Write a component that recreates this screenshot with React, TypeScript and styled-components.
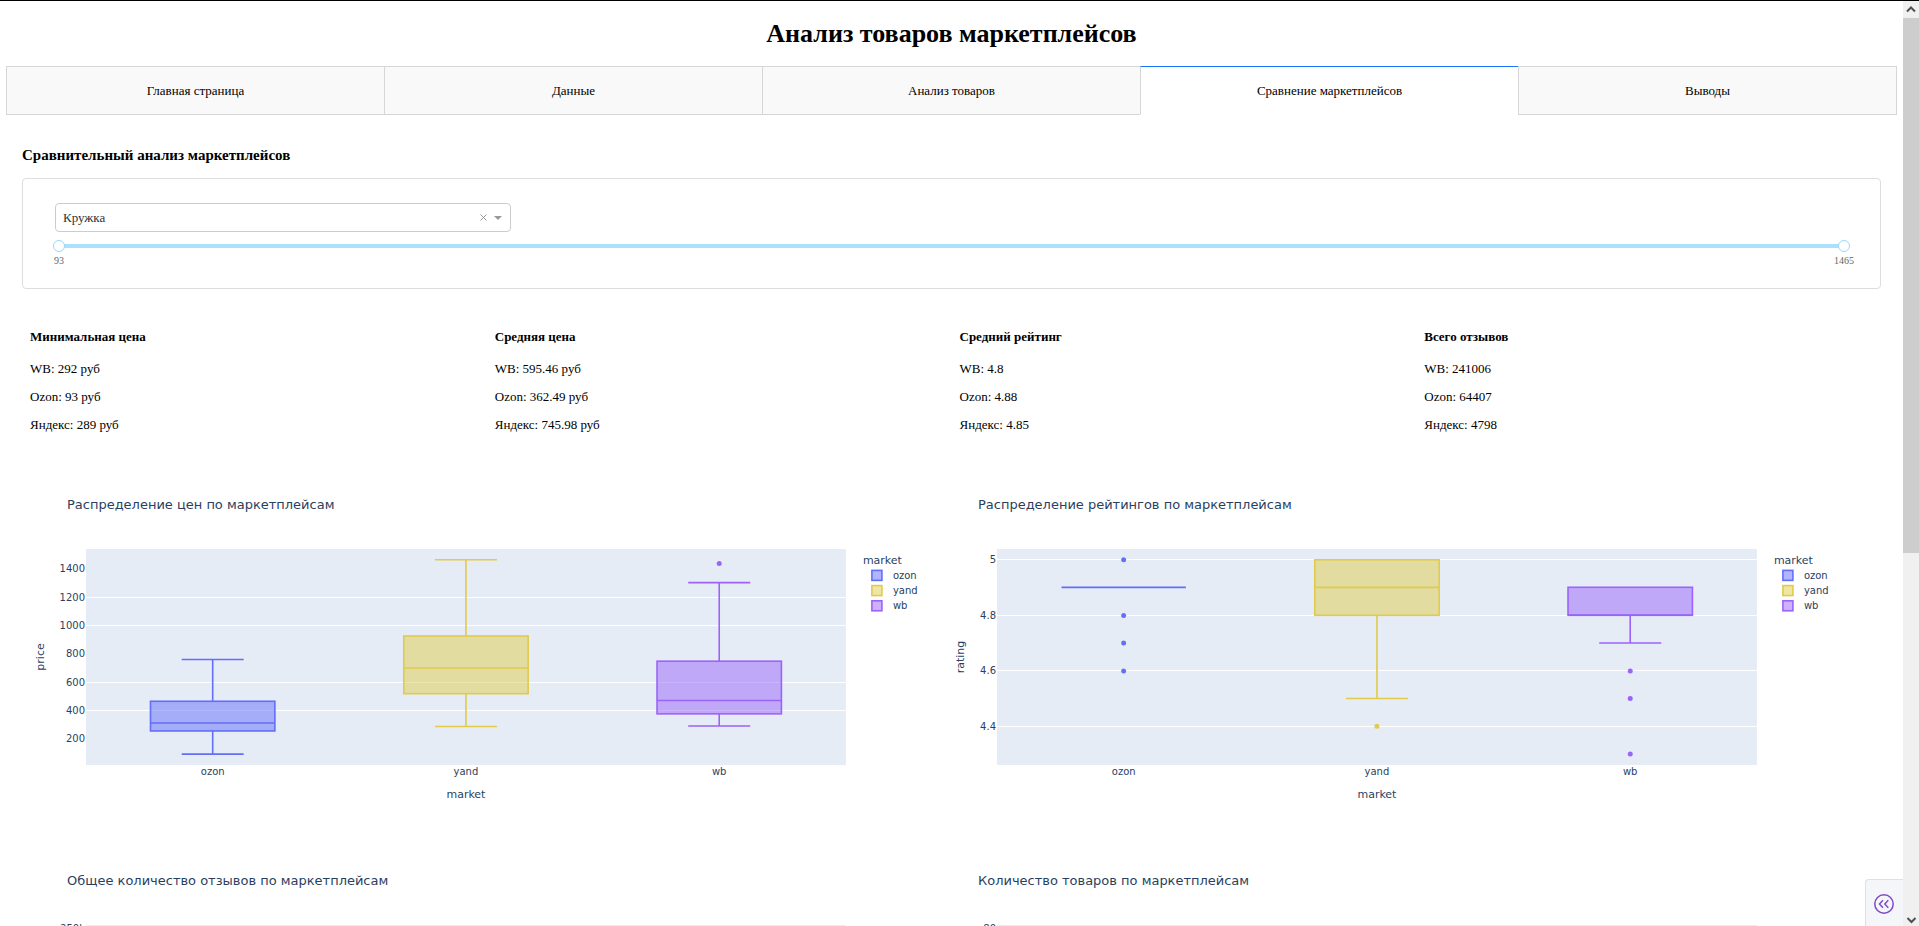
import React, { useState } from 'react';
import styled, { createGlobalStyle } from 'styled-components';

const GlobalStyle = createGlobalStyle`
  *, *::before, *::after { box-sizing: border-box; }
  body {
    margin: 0;
    background: #ffffff;
    color: #000000;
    font-family: 'Liberation Serif', 'Times New Roman', serif;
    font-size: 13px;
    line-height: 15px;
  }
  h1, h2, h3, p { margin: 0; }
  button, select, input { font: inherit; color: inherit; }
`;

const Shell = styled.div`
  display: flex;
  height: 100vh;
  border-top: 1px solid #000000;
  overflow: hidden;
`;

const Page = styled.main`
  flex: 1;
  min-width: 0;
  padding: 0 6px;
  overflow-y: auto;
  scrollbar-width: none;
`;

const PageTitle = styled.h1`
  padding: 18px 0 17px;
  font-size: 26px;
  line-height: 30px;
  text-align: center;
`;

const TabBar = styled.div`
  display: flex;
`;

const Tab = styled.button<{ $active: boolean }>`
  flex: 1;
  height: 49px;
  padding: 0;
  border: solid #d6d6d6;
  border-width: 1px 0 1px 1px;
  border-top-color: ${(p) => (p.$active ? '#1975fa' : '#d6d6d6')};
  border-bottom-color: ${(p) => (p.$active ? '#ffffff' : '#d6d6d6')};
  background: ${(p) => (p.$active ? '#ffffff' : '#f9f9f9')};
  cursor: pointer;

  &:last-child {
    border-right-width: 1px;
  }
`;

const TabPanel = styled.section`
  padding: 31px 16px 16px;
`;

const SectionTitle = styled.h2`
  margin-bottom: 14px;
  font-size: 15px;
  line-height: 18px;
`;

const Filters = styled.div`
  padding: 24px 30px 21px;
  border: 1px solid #dddddd;
  border-radius: 4px;
`;

const Dropdown = styled.div`
  display: flex;
  align-items: center;
  width: 456px;
  max-width: 100%;
  height: 29px;
  margin: 0 2px 8px;
  padding-right: 8px;
  border: 1px solid #cccccc;
  border-radius: 4px;
  color: #333333;
`;

const DropdownSelect = styled.select`
  flex: 1;
  height: 100%;
  padding: 0 7px;
  border: 0;
  outline: 0;
  background: transparent;
  appearance: none;
`;

const ClearButton = styled.button`
  display: flex;
  padding: 4px;
  border: 0;
  background: transparent;
  color: #999999;
  cursor: pointer;
`;

const Caret = styled.svg`
  margin-left: 3px;
  fill: #999999;
`;

const Slider = styled.div`
  display: grid;
  align-items: center;
  height: 12px;
`;

const Rail = styled.div`
  grid-area: 1 / 1;
  height: 4px;
  margin: 0 6px;
  background: #abe2fb;
`;

const SliderInput = styled.input`
  grid-area: 1 / 1;
  width: 100%;
  height: 12px;
  margin: 0;
  background: transparent;
  appearance: none;
  pointer-events: none;

  &::-webkit-slider-thumb {
    appearance: none;
    width: 12px;
    height: 12px;
    border: 1px solid #96dbfa;
    border-radius: 50%;
    background: #ffffff;
    pointer-events: auto;
  }
`;

const SliderMarks = styled.div`
  display: flex;
  justify-content: space-between;
  margin-top: 3px;
  color: #666666;
  font-size: 10px;
  line-height: 12px;
`;

const Mark = styled.span`
  display: flex;
  justify-content: center;
  width: 12px;
  white-space: nowrap;
`;

const Stats = styled.div`
  display: grid;
  grid-template-columns: repeat(4, 1fr);
  margin: 40px 0 37px;
`;

const Stat = styled.div`
  display: flex;
  flex-direction: column;
  gap: 13px;
  padding: 0 8px;
`;

const StatTitle = styled.h3`
  margin-bottom: 4px;
  font-size: 13px;
`;

const Charts = styled.div`
  display: flex;
  flex-wrap: wrap;
  row-gap: 16px;
`;

const ChartSvg = styled.svg`
  display: block;
  width: 49%;
  height: auto;
  font-family: 'DejaVu Sans', Verdana, sans-serif;
  font-size: 10px;
  fill: #2a3f5f;

  .title { font-size: 13px; }
  .axis { font-size: 11px; }
`;

const DebugButton = styled.button`
  position: fixed;
  right: 16px;
  bottom: 0;
  display: flex;
  align-items: center;
  justify-content: center;
  width: 38px;
  height: 47px;
  padding: 2px 2px 0 0;
  border: solid #dbdff0;
  border-width: 1px 0 0 1px;
  border-radius: 4px 0 0 0;
  background: #f4f6fa;
  color: #7f4bc4;
  cursor: pointer;
`;

const ScrollTrack = styled.div`
  display: flex;
  flex-direction: column;
  width: 16px;
  background: #f0f0f0;
`;

const ScrollArrow = styled.svg`
  display: block;
  width: 16px;
  height: 17px;
  fill: none;
  stroke: #505050;
  stroke-width: 2;
`;

const ScrollLane = styled.div`
  flex: 1;
`;

const ScrollThumb = styled.div`
  height: 60%;
  background: #cdcdcd;
`;

const tabs = ['Главная страница', 'Данные', 'Анализ товаров', 'Сравнение маркетплейсов', 'Выводы'];

const stats = [
  { title: 'Минимальная цена', rows: ['WB: 292 руб', 'Ozon: 93 руб', 'Яндекс: 289 руб'] },
  { title: 'Средняя цена', rows: ['WB: 595.46 руб', 'Ozon: 362.49 руб', 'Яндекс: 745.98 руб'] },
  { title: 'Средний рейтинг', rows: ['WB: 4.8', 'Ozon: 4.88', 'Яндекс: 4.85'] },
  { title: 'Всего отзывов', rows: ['WB: 241006', 'Ozon: 64407', 'Яндекс: 4798'] },
];

const markets = [
  { name: 'ozon', color: '#636efa', x: 190.7 },
  { name: 'yand', color: '#e0cb4c', x: 444 },
  { name: 'wb', color: '#9b63fa', x: 697.3 },
];

type Box = {
  q1: number;
  median: number;
  q3: number;
  low?: number;
  high?: number;
  dots?: number[];
};

type ChartProps = {
  title: string;
  yLabel?: string;
  yLabelX?: number;
  ticks: { label: string; y: number }[];
  grid?: number[];
  boxes?: Box[];
};

function BoxMark({ box, x, color }: { box: Box; x: number; color: string }) {
  return (
    <g stroke={color} strokeWidth={1.6} fill="none">
      <rect x={x - 62.2} y={box.q3} width={124.4} height={box.q1 - box.q3} fill={color} fillOpacity={0.5} />
      <path d={`M${x - 62.2} ${box.median}h124.4`} />
      {box.high !== undefined && <path d={`M${x} ${box.q3}V${box.high}M${x - 31} ${box.high}h62`} />}
      {box.low !== undefined && <path d={`M${x} ${box.q1}V${box.low}M${x - 31} ${box.low}h62`} />}
      {box.dots?.map((y) => (
        <circle key={y} cx={x} cy={y} r={2.5} fill={color} stroke="none" />
      ))}
    </g>
  );
}

function Chart({ title, yLabel, yLabelX = 22, ticks, grid = [], boxes }: ChartProps) {
  return (
    <ChartSvg viewBox="0 0 911 360" role="img" aria-label={title}>
      <text className="title" x={45} y={40}>{title}</text>
      <rect x={64} y={80} width={760} height={216} fill="#e5ecf6" />
      {grid.map((y) => (
        <rect key={y} x={64} y={y} width={760} height={1} fill="#ffffff" />
      ))}
      {ticks.map((t) => (
        <text key={t.label} x={63} y={t.y} textAnchor="end">{t.label}</text>
      ))}
      {boxes && (
        <>
          {markets.map((m, i) => (
            <g key={m.name}>
              <BoxMark box={boxes[i]} x={m.x} color={m.color} />
              <text x={m.x} y={306} textAnchor="middle">{m.name}</text>
              <rect
                x={850}
                y={101.4 + i * 15.2}
                width={10}
                height={10}
                fill={m.color}
                fillOpacity={0.5}
                stroke={m.color}
                strokeWidth={1.6}
              />
              <text x={871} y={110 + i * 15}>{m.name}</text>
            </g>
          ))}
          <text className="axis" x={841} y={95}>market</text>
          <text className="axis" x={444} y={329} textAnchor="middle">market</text>
          <text className="axis" transform={`translate(${yLabelX} 188) rotate(-90)`} textAnchor="middle">
            {yLabel}
          </text>
        </>
      )}
    </ChartSvg>
  );
}

const charts: ChartProps[] = [
  {
    title: 'Распределение цен по маркетплейсам',
    yLabel: 'price',
    grid: [128, 156, 213, 241],
    ticks: [
      { label: '1400', y: 103 },
      { label: '1200', y: 132 },
      { label: '1000', y: 160 },
      { label: '800', y: 188 },
      { label: '600', y: 217 },
      { label: '400', y: 245 },
      { label: '200', y: 273 },
    ],
    boxes: [
      { q1: 262, median: 254, q3: 232.3, high: 190.5, low: 285.2 },
      { q1: 224.7, median: 199.1, q3: 167, high: 90.8, low: 257.6 },
      { q1: 244.9, median: 231.6, q3: 192.2, high: 113.6, low: 257, dots: [94.4] },
    ],
  },
  {
    title: 'Распределение рейтингов по маркетплейсам',
    yLabel: 'rating',
    yLabelX: 31,
    grid: [90, 146, 201, 257],
    ticks: [
      { label: '5', y: 94 },
      { label: '4.8', y: 150 },
      { label: '4.6', y: 205 },
      { label: '4.4', y: 261 },
    ],
    boxes: [
      { q1: 118.4, median: 118.4, q3: 118.4, dots: [90.7, 146.4, 174, 202] },
      { q1: 146.3, median: 118.4, q3: 90.8, low: 229.6, dots: [257.4] },
      { q1: 146.3, median: 146, q3: 118.3, low: 174, dots: [202, 229.6, 285.1] },
    ],
  },
  { title: 'Общее количество отзывов по маркетплейсам', ticks: [{ label: '250k', y: 87 }] },
  { title: 'Количество товаров по маркетплейсам', ticks: [{ label: '80', y: 87 }] },
];

export default function App() {
  const [active, setActive] = useState(3);
  const [range, setRange] = useState([93, 1465]);

  return (
    <>
      <GlobalStyle />
      <Shell>
        <Page>
          <PageTitle>Анализ товаров маркетплейсов</PageTitle>
          <TabBar role="tablist">
            {tabs.map((label, i) => (
              <Tab
                key={label}
                type="button"
                role="tab"
                aria-selected={i === active}
                $active={i === active}
                onClick={() => setActive(i)}
              >
                {label}
              </Tab>
            ))}
          </TabBar>

          <TabPanel role="tabpanel">
            <SectionTitle>Сравнительный анализ маркетплейсов</SectionTitle>
            <Filters>
              <Dropdown>
                <DropdownSelect aria-label="Товар" defaultValue="Кружка">
                  <option>Кружка</option>
                </DropdownSelect>
                <ClearButton type="button" aria-label="Очистить">
                  <svg width="7" height="7" viewBox="0 0 7 7" stroke="currentColor" strokeWidth="1">
                    <path d="M0.5 0.5L6.5 6.5M6.5 0.5L0.5 6.5" />
                  </svg>
                </ClearButton>
                <Caret width="8" height="4" viewBox="0 0 8 4" aria-hidden="true">
                  <path d="M0 0H8L4 4Z" />
                </Caret>
              </Dropdown>
              <Slider>
                <Rail />
                <SliderInput
                  type="range"
                  aria-label="Минимальная цена"
                  min={93}
                  max={1465}
                  value={range[0]}
                  onChange={(e) => setRange([Math.min(Number(e.target.value), range[1]), range[1]])}
                />
                <SliderInput
                  type="range"
                  aria-label="Максимальная цена"
                  min={93}
                  max={1465}
                  value={range[1]}
                  onChange={(e) => setRange([range[0], Math.max(Number(e.target.value), range[0])])}
                />
              </Slider>
              <SliderMarks>
                <Mark>{range[0]}</Mark>
                <Mark>{range[1]}</Mark>
              </SliderMarks>
            </Filters>

            <Stats>
              {stats.map((s) => (
                <Stat key={s.title}>
                  <StatTitle>{s.title}</StatTitle>
                  {s.rows.map((r) => (
                    <p key={r}>{r}</p>
                  ))}
                </Stat>
              ))}
            </Stats>

            <Charts>
              {charts.map((c) => (
                <Chart key={c.title} {...c} />
              ))}
            </Charts>
          </TabPanel>
        </Page>

        <ScrollTrack aria-hidden="true">
          <ScrollArrow viewBox="0 0 16 17">
            <path d="M4 10.5L8 6.5L12 10.5" />
          </ScrollArrow>
          <ScrollLane>
            <ScrollThumb />
          </ScrollLane>
          <ScrollArrow viewBox="0 0 16 17">
            <path d="M4.500 9L8.500 13L12.500 9" />
          </ScrollArrow>
        </ScrollTrack>
      </Shell>

      <DebugButton type="button" aria-label="Меню">
        <svg width="20" height="20" viewBox="0 0 20 20" fill="none" stroke="currentColor" strokeWidth="1.5">
          <circle cx="10" cy="10" r="9.200" />
          <path d="M9 6.300L5.500 10L9 13.700M14.300 6.300L10.800 10L14.300 13.700" />
        </svg>
      </DebugButton>
    </>
  );
}
